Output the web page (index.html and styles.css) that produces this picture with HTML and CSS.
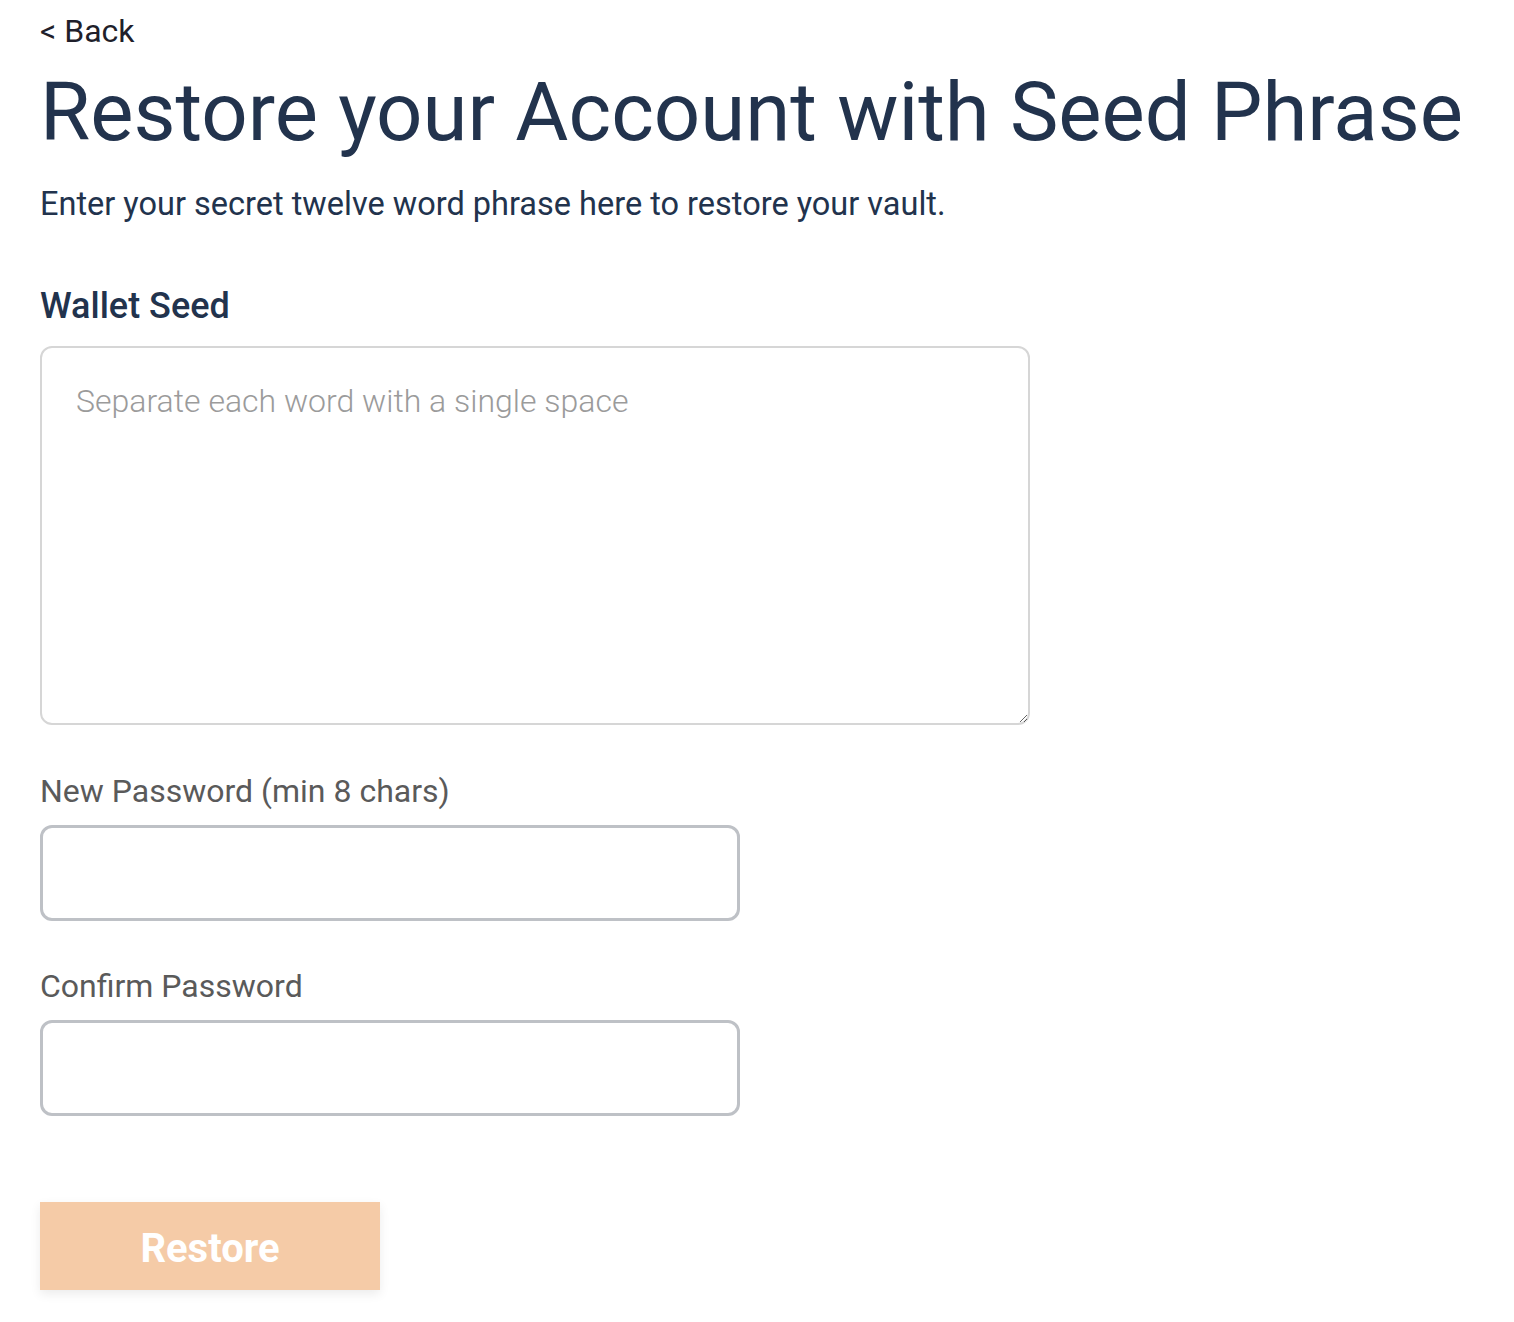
FILE: index.html
```html
<!DOCTYPE html>
<html>
<head>
<meta charset="utf-8">
<link rel="stylesheet" href="styles.css">
</head>
<body>
<div class="page">
  <a class="back">&lt; Back</a>
  <h1 class="title">Restore your Account with Seed Phrase</h1>
  <p class="subtitle">Enter your secret twelve word phrase here to restore your vault.</p>
  <label class="seed-label">Wallet Seed</label>
  <textarea class="seed" placeholder="Separate each word with a single space"></textarea>
  <label class="pw-label">New Password (min 8 chars)</label>
  <input class="pw" type="password">
  <label class="pw-label confirm">Confirm Password</label>
  <input class="pw" type="password">
  <button class="restore">Restore</button>
</div>
</body>
</html>
```

FILE: styles.css
```css
* { box-sizing: border-box; }
html, body { margin: 0; padding: 0; background: #fff; }
body { font-family: Roboto, "Noto Sans", sans-serif; }
.page {
  display: flex;
  flex-direction: column;
  align-items: flex-start;
  padding: 10px 40px 30px;
}
.back {
  font-size: 32px;
  line-height: 42px;
  color: #1f1f2b;
}
.title {
  margin: 12px 0 0;
  font-size: 81.5px;
  font-weight: 400;
  line-height: 96px;
  color: #22334d;
  white-space: nowrap;
}
.subtitle {
  margin: 24px 0 0;
  font-size: 32.5px;
  line-height: 40px;
  color: #22334d;
}
.seed-label {
  margin-top: 60px;
  font-size: 36px;
  font-weight: 500;
  line-height: 44px;
  color: #22334d;
}
.seed {
  margin-top: 18px;
  width: 990px;
  height: 379px;
  border: 2px solid #d6d6d6;
  border-radius: 12px;
  padding: 34px 34px 30px;
  font-family: Roboto, sans-serif;
  font-size: 32px;
  font-weight: 300;
  resize: vertical;
  outline: none;
}
.seed::placeholder { color: #9b9b9b; }
.pw-label {
  margin-top: 46px;
  font-size: 32px;
  line-height: 40px;
  color: #5a5a5a;
}
.pw-label.confirm { margin-top: 45px; }
.pw {
  margin-top: 14px;
  width: 700px;
  height: 96px;
  border: 3px solid #bec1c6;
  border-radius: 12px;
  outline: none;
  font-size: 32px;
}
.restore {
  margin-top: 86px;
  width: 340px;
  height: 88px;
  border: none;
  padding: 4px 0 0;
  background: #f5cba7;
  color: #fff;
  font-family: Roboto, sans-serif;
  font-size: 40px;
  font-weight: 700;
  box-shadow: 0 4px 10px rgba(0,0,0,0.08);
}
```
